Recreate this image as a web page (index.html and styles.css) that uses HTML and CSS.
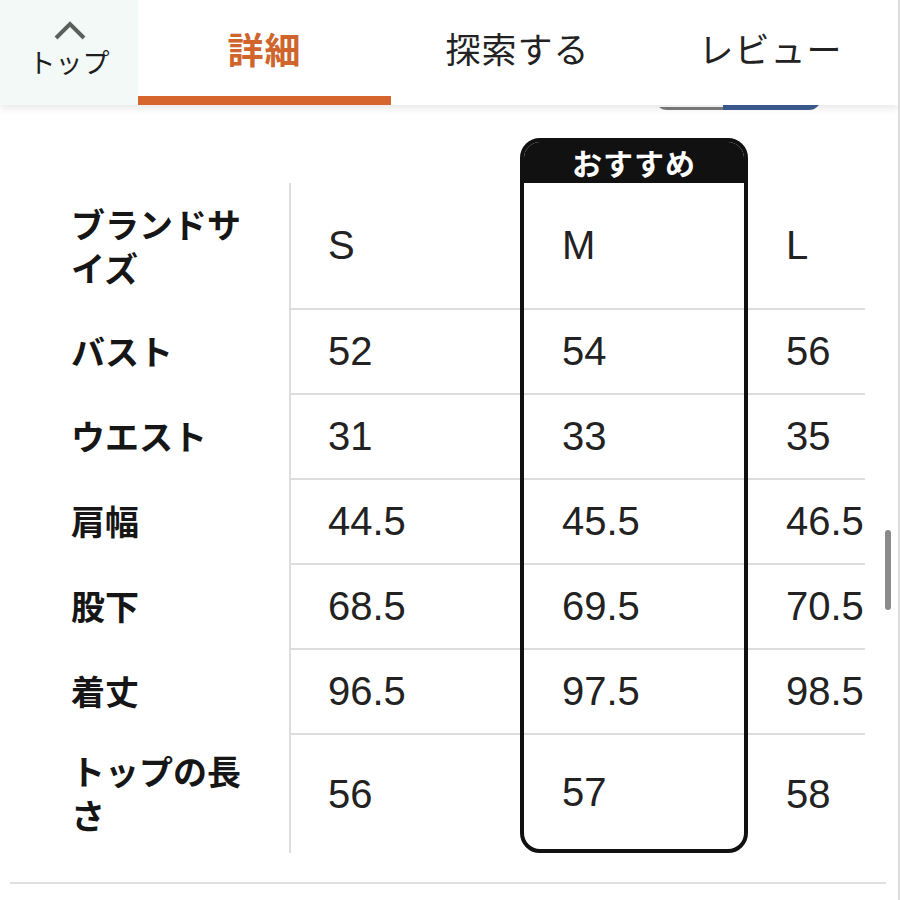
FILE: index.html
```html
<!DOCTYPE html>
<html lang="ja">
<head>
<meta charset="utf-8">
<title>サイズ表</title>
<link rel="stylesheet" href="styles.css">
</head>
<body>
<div class="page">
  <header class="topbar">
    <div class="back">
      <svg class="caret" width="34" height="22" viewBox="0 0 34 22" aria-hidden="true">
        <polyline points="3,19 17,5 31,19" fill="none" stroke="#5b605d" stroke-width="4"/>
      </svg>
      <span class="back-label">トップ</span>
    </div>
    <nav class="tabs">
      <div class="tab active">詳細</div>
      <div class="tab">探索する</div>
      <div class="tab">レビュー</div>
    </nav>
  </header>
  <div class="peek"><span class="peek-a"></span><span class="peek-b"></span></div>

  <section class="size-table">
    <div class="col col-label">
      <div class="spacer"></div>
      <div class="cell row-first">ブランドサイズ</div>
      <div class="cell">バスト</div>
      <div class="cell">ウエスト</div>
      <div class="cell">肩幅</div>
      <div class="cell">股下</div>
      <div class="cell">着丈</div>
      <div class="cell row-last">トップの長さ</div>
    </div>
    <div class="col col-s">
      <div class="spacer"></div>
      <div class="cell row-first">S</div>
      <div class="cell">52</div>
      <div class="cell">31</div>
      <div class="cell">44.5</div>
      <div class="cell">68.5</div>
      <div class="cell">96.5</div>
      <div class="cell row-last">56</div>
    </div>
    <div class="col col-m">
      <div class="badge">おすすめ</div>
      <div class="cell row-first">M</div>
      <div class="cell">54</div>
      <div class="cell">33</div>
      <div class="cell">45.5</div>
      <div class="cell">69.5</div>
      <div class="cell">97.5</div>
      <div class="cell row-last">57</div>
    </div>
    <div class="col col-l">
      <div class="spacer"></div>
      <div class="cell row-first">L</div>
      <div class="cell">56</div>
      <div class="cell">35</div>
      <div class="cell">46.5</div>
      <div class="cell">70.5</div>
      <div class="cell">98.5</div>
      <div class="cell row-last">58</div>
    </div>
  </section>

  <div class="rule"></div>
  <div class="scrollbar"></div>
</div>
</body>
</html>
```

FILE: styles.css
```css
* { box-sizing: border-box; }

html, body {
  margin: 0;
  padding: 0;
  background: #ffffff;
}

body {
  font-family: "Noto Sans CJK JP", "Liberation Sans", sans-serif;
  color: #1c1c1c;
}

.page {
  position: relative;
  width: 900px;
  height: 900px;
  overflow: hidden;
  border-right: 2px solid #dcdcdc;
}

/* ---------- top bar ---------- */
.topbar {
  position: relative;
  z-index: 2;
  display: flex;
  height: 105px;
  background: #ffffff;
  box-shadow: 0 3px 8px rgba(0, 0, 0, 0.10);
}

.back {
  width: 138px;
  height: 105px;
  background: #f3f9f6;
  display: flex;
  flex-direction: column;
  align-items: center;
}

.caret {
  display: block;
  margin-top: 19px;
  margin-left: 2px;
}

.back-label {
  margin-top: 5px;
  font-size: 27px;
  line-height: 32px;
  color: #1e1e1e;
}

.tabs {
  display: flex;
}

.tab {
  width: 253px;
  height: 105px;
  padding-bottom: 10px;
  display: flex;
  align-items: center;
  justify-content: center;
  font-size: 35px;
  color: #222222;
  letter-spacing: 1px;
}

.tab.active {
  font-size: 36px;
  color: #d0642d;
  font-weight: 700;
  box-shadow: inset 0 -9px 0 #d5652c;
}

/* partially hidden control under the bar */
.peek {
  position: absolute;
  z-index: 1;
  top: 94px;
  left: 655px;
  width: 166px;
  height: 16px;
  display: flex;
  border-radius: 0 0 12px 12px;
  overflow: hidden;
}

.peek-a {
  width: 68px;
  border-bottom: 3px solid #7c7c7c;
  background: #ffffff;
}

.peek-b {
  flex: 1;
  background: #3d5e93;
}

/* ---------- size table ---------- */
.size-table {
  display: flex;
  margin: 33px 0 0 70px;
}

.col {
  display: flex;
  flex-direction: column;
}

.col-label { width: 219px; }
.col-s { width: 231px; }
.col-m { width: 228px; }
.col-l { width: 117px; }

.spacer { height: 45px; }

.cell {
  height: 85px;
  display: flex;
  align-items: center;
}

.cell.row-first { height: 125px; }
.cell.row-last { height: 120px; }

.col-label .cell {
  padding: 0 40px 0 1px;
  font-size: 34px;
  font-weight: 700;
  line-height: 44px;
  color: #161616;
}

.col-s .cell,
.col-m .cell,
.col-l .cell {
  font-family: "Liberation Sans", "Noto Sans CJK JP", sans-serif;
  font-size: 40px;
  color: #222222;
  border-top: 2px solid #dddddd;
  padding-left: 38px;
}

.col-s .cell.row-first,
.col-m .cell.row-first,
.col-l .cell.row-first {
  border-top: none;
}

.col-s .cell {
  border-left: 2px solid #dddddd;
  padding-left: 37px;
}

.col-m {
  border: 4px solid #111111;
  border-radius: 20px;
  overflow: hidden;
}

.col-m .cell { padding-left: 38px; }
.col-m .cell.row-last { height: 116px; }

.badge {
  height: 41px;
  background: #111111;
  color: #ffffff;
  font-size: 30px;
  font-weight: 700;
  line-height: 41px;
  text-align: center;
  letter-spacing: 1px;
}

/* ---------- bottom rule & scrollbar ---------- */
.rule {
  height: 2px;
  margin: 29px 12px 0 10px;
  background: #e0e0e0;
}

.scrollbar {
  position: absolute;
  left: 885px;
  top: 530px;
  width: 6px;
  height: 80px;
  border-radius: 3px;
  background: #8a8a8a;
}
```
